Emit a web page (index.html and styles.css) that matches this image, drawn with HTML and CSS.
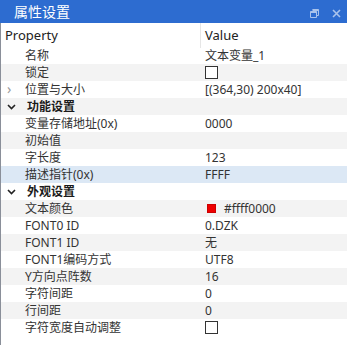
FILE: index.html
```html
<!DOCTYPE html>
<html>
<head>
<meta charset="utf-8">
<link rel="stylesheet" href="styles.css">
</head>
<body>
<div class="panel">
  <div class="titlebar">
    <span class="title">属性设置</span>
    <span class="tools">
      <svg class="ico" width="9" height="9" viewBox="0 0 9 9"><path d="M2.5 0.5h6v6h-2M0.5 2.5h6v6h-6z" fill="none" stroke="#a9c3ec" stroke-width="1"/><path d="M2.5 0.5h6v1.5h-6zM0.5 2.5h6v1.5h-6z" fill="#a9c3ec"/></svg>
      <svg class="ico" width="9" height="9" viewBox="0 0 9 9"><path d="M1 1L8 8M8 1L1 8" stroke="#a9c3ec" stroke-width="1.6"/></svg>
    </span>
  </div>
  <div class="grid">
    <div class="head"><div class="hc first">Property</div><div class="hc">Value</div></div>
    <div class="row"><div class="n">名称</div><div class="v">文本变量_1</div></div>
    <div class="row alt"><div class="n">锁定</div><div class="v"><span class="cb"></span></div></div>
    <div class="row"><div class="n"><span class="exp">›</span>位置与大小</div><div class="v">[(364,30) 200x40]</div></div>
    <div class="row alt cat"><div class="n"><svg class="chev" width="9" height="6" viewBox="0 0 9 6"><path d="M1 1L4.5 4.5L8 1" fill="none" stroke="#222" stroke-width="1.6"/></svg>功能设置</div><div class="v"></div></div>
    <div class="row"><div class="n">变量存储地址(0x)</div><div class="v">0000</div></div>
    <div class="row alt"><div class="n">初始值</div><div class="v"></div></div>
    <div class="row"><div class="n">字长度</div><div class="v">123</div></div>
    <div class="row sel"><div class="n">描述指针(0x)</div><div class="v">FFFF</div></div>
    <div class="row cat"><div class="n"><svg class="chev" width="9" height="6" viewBox="0 0 9 6"><path d="M1 1L4.5 4.5L8 1" fill="none" stroke="#222" stroke-width="1.6"/></svg>外观设置</div><div class="v"></div></div>
    <div class="row alt"><div class="n">文本颜色</div><div class="v"><span class="sw"></span>#ffff0000</div></div>
    <div class="row"><div class="n">FONT0 ID</div><div class="v">0.DZK</div></div>
    <div class="row alt"><div class="n">FONT1 ID</div><div class="v">无</div></div>
    <div class="row"><div class="n">FONT1编码方式</div><div class="v">UTF8</div></div>
    <div class="row alt"><div class="n">Y方向点阵数</div><div class="v">16</div></div>
    <div class="row"><div class="n">字符间距</div><div class="v">0</div></div>
    <div class="row alt"><div class="n">行间距</div><div class="v">0</div></div>
    <div class="row"><div class="n">字符宽度自动调整</div><div class="v"><span class="cb"></span></div></div>
  </div>
</div>
</body>
</html>
```
FILE: styles.css
```css
html, body { margin: 0; padding: 0; background: #fff; }
body { width: 347px; height: 345px; overflow: hidden; font-family: "Noto Sans", "Noto Sans CJK SC", sans-serif; font-size: 12px; color: #333; }
.panel { display: flex; flex-direction: column; height: 345px; }
.titlebar { height: 23px; background: #2d6cd0; display: flex; align-items: center; justify-content: space-between; padding: 0 6px 0 14px; flex: none; }
.title { color: #fff; font-family: "Noto Sans CJK SC", sans-serif; font-size: 14px; line-height: 23px; }
.tools { display: flex; align-items: center; gap: 13px; padding-top: 3px; }
.ico { display: block; }
.grid { flex: 1; border-left: 1px solid #8a8f99; display: flex; flex-direction: column; }
.head { display: grid; grid-template-columns: 200px 1fr; height: 24px; align-items: stretch; }
.hc { padding-left: 4px; line-height: 25px; font-size: 13px; color: #222; }
.hc.first { border-right: 1px solid #e6e6e6; }
.row { display: grid; grid-template-columns: 201px 1fr; height: 17px; line-height: 17px; }
.row.alt { background: #f3f3f3; }
.row.sel { background: #dce8f5; }
.n { padding-left: 24px; position: relative; white-space: nowrap; }
.v { padding-left: 3px; display: flex; align-items: center; white-space: nowrap; }
.cat .n { font-weight: bold; color: #1a1a1a; padding-left: 26px; }
.exp { position: absolute; left: 6px; top: -1px; color: #999; font-size: 14px; }
.chev { position: absolute; left: 6px; top: 6px; }
.cb { width: 11px; height: 11px; border: 1px solid #333; background: #fff; display: inline-block; }
.sw { width: 9px; height: 9px; background: #e00; display: inline-block; margin: 0 8px 0 2px; border: 1px solid #c00; box-sizing: border-box; }
```
